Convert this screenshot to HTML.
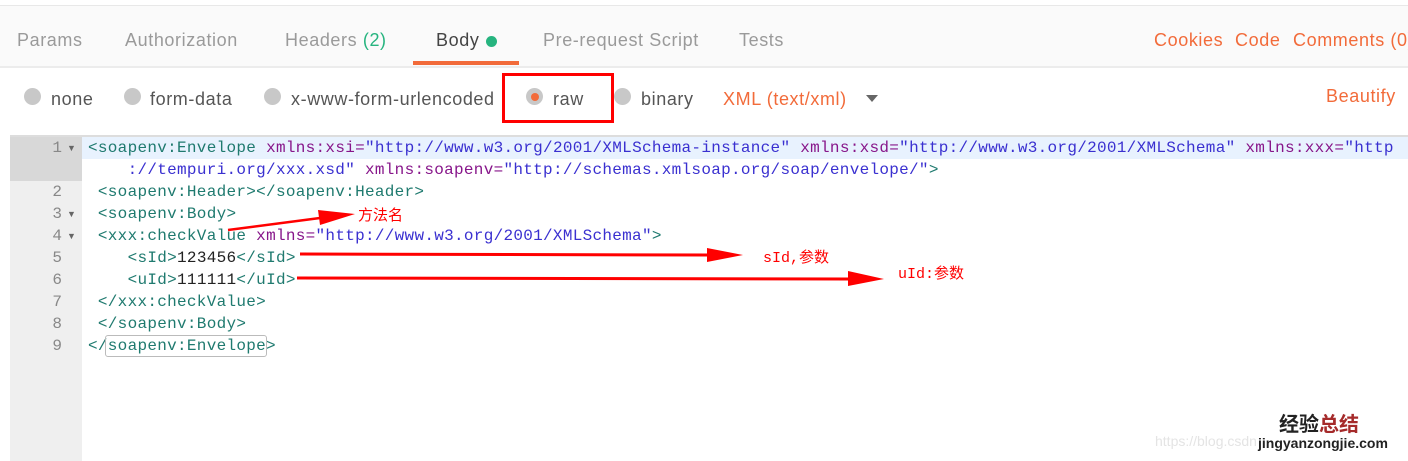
<!DOCTYPE html>
<html><head><meta charset="utf-8"><style>
body{margin:0;width:1408px;height:461px;overflow:hidden;background:#fff;font-family:"Liberation Sans","Noto Sans CJK SC",sans-serif;position:relative}
.a{position:absolute;white-space:pre}
.tab{font-size:18px;color:#9a9a9a;top:30px;letter-spacing:.6px}
.or{color:#f26b3a}
.rad{position:absolute;width:17px;height:17px;border-radius:50%;background:#c8c8c8;top:88px}
.opt{font-size:18px;color:#555;top:89px;letter-spacing:.6px}
.code{font-family:"Liberation Mono","DejaVu Sans Mono",monospace;font-size:16px;letter-spacing:.29px;line-height:22px;color:#1f7a6f}
.t{color:#1f7a6f}.n{color:#87168a}.v{color:#3a30d0}.k{color:#222}
.ln{position:absolute;left:10px;width:52px;text-align:right;font-family:"Liberation Mono",monospace;font-size:16px;color:#888;line-height:22px}
.fd{position:absolute;font-size:9px;color:#666;left:67px}
</style></head><body>
<div class="a" style="left:0;top:0;width:1408px;height:5px;background:#fff;border-bottom:1px solid #e8e8e8"></div>
<div class="a" style="left:0;top:6px;width:1408px;height:60px;background:#fafafa;border-bottom:2px solid #ececec"></div>
<div class="a tab" style="left:17px">Params</div>
<div class="a tab" style="left:125px">Authorization</div>
<div class="a tab" style="left:285px">Headers <span style="color:#26b47f">(2)</span></div>
<div class="a tab" style="left:436px;color:#444">Body</div>
<div class="a" style="left:486px;top:36px;width:11px;height:11px;border-radius:50%;background:#26b47f"></div>
<div class="a" style="left:413px;top:61px;width:106px;height:4px;background:#f26b3a"></div>
<div class="a tab" style="left:543px">Pre-request Script</div>
<div class="a tab" style="left:739px">Tests</div>
<div class="a tab or" style="left:1154px">Cookies</div>
<div class="a tab or" style="left:1235px">Code</div>
<div class="a tab or" style="left:1293px">Comments (0)</div>

<div class="rad" style="left:24px"></div><div class="a opt" style="left:51px">none</div>
<div class="rad" style="left:124px"></div><div class="a opt" style="left:150px">form-data</div>
<div class="rad" style="left:264px"></div><div class="a opt" style="left:291px">x-www-form-urlencoded</div>
<div class="rad" style="left:526px"></div><div class="a" style="left:531px;top:93px;width:8px;height:8px;border-radius:50%;background:#f26b3a"></div>
<div class="a opt" style="left:553px">raw</div>
<div class="a" style="left:502px;top:73px;width:106px;height:44px;border:3px solid #f00"></div>
<div class="rad" style="left:614px"></div><div class="a opt" style="left:641px">binary</div>
<div class="a opt or" style="left:723px;color:#f26b3a">XML (text/xml)</div>
<div class="a" style="left:866px;top:95px;width:0;height:0;border-left:6px solid transparent;border-right:6px solid transparent;border-top:7px solid #666"></div>
<div class="a opt" style="left:1326px;top:86px;color:#f26b3a">Beautify</div>

<div class="a" style="left:10px;top:135px;width:1398px;height:2px;background:#ddd"></div>
<div class="a" style="left:10px;top:137px;width:72px;height:324px;background:#efefef"></div>
<div class="a" style="left:10px;top:137px;width:72px;height:44px;background:#d8d8d8"></div>
<div class="a" style="left:82px;top:137px;width:1326px;height:22px;background:#e8f2fe"></div>
<div class="ln" style="top:137px">1</div><div class="ln" style="top:181px">2</div><div class="ln" style="top:203px">3</div><div class="ln" style="top:225px">4</div><div class="ln" style="top:247px">5</div><div class="ln" style="top:269px">6</div><div class="ln" style="top:291px">7</div><div class="ln" style="top:313px">8</div><div class="ln" style="top:335px">9</div>
<div class="fd" style="top:143px">▼</div><div class="fd" style="top:209px">▼</div><div class="fd" style="top:231px">▼</div>
<div class="a code" style="left:88px;top:137px"><span class="t">&lt;soapenv:Envelope</span> <span class="n">xmlns:xsi=</span><span class="v">"http://www.w3.org/2001/XMLSchema-instance"</span> <span class="n">xmlns:xsd=</span><span class="v">"http://www.w3.org/2001/XMLSchema"</span> <span class="n">xmlns:xxx=</span><span class="v">"http</span>
    <span class="v">://tempuri.org/xxx.xsd"</span> <span class="n">xmlns:soapenv=</span><span class="v">"http://schemas.xmlsoap.org/soap/envelope/"</span>&gt;
 &lt;soapenv:Header&gt;&lt;/soapenv:Header&gt;
 &lt;soapenv:Body&gt;
 &lt;xxx:checkValue <span class="n">xmlns=</span><span class="v">"http://www.w3.org/2001/XMLSchema"</span>&gt;
    &lt;sId&gt;<span class="k">123456</span>&lt;/sId&gt;
    &lt;uId&gt;<span class="k">111111</span>&lt;/uId&gt;
 &lt;/xxx:checkValue&gt;
 &lt;/soapenv:Body&gt;
&lt;/soapenv:Envelope&gt;</div>
<div class="a" style="left:105px;top:335px;width:160px;height:20px;border:1px solid #bbb;border-radius:3px"></div>

<svg class="a" style="left:0;top:0" width="1408" height="461">
<g fill="#f00" stroke="#f00">
<line x1="228" y1="230" x2="320" y2="218" stroke-width="2.5"/>
<polygon points="318,210 355,214 320,225" stroke="none"/>
<line x1="300" y1="254" x2="710" y2="255" stroke-width="3"/>
<polygon points="707,248 743,255 707,262" stroke="none"/>
<line x1="297" y1="278" x2="850" y2="279" stroke-width="3"/>
<polygon points="848,271 884,279 848,286" stroke="none"/>
</g></svg>
<div class="a" style="left:358px;top:204px;font-size:15px;color:#f00">方法名</div>
<div class="a" style="left:763px;top:246px;font-size:15px;color:#f00;font-family:'Liberation Mono','Noto Sans CJK SC',monospace">sId,参数</div>
<div class="a" style="left:898px;top:262px;font-size:15px;color:#f00;font-family:'Liberation Mono','Noto Sans CJK SC',monospace">uId:参数</div>

<div class="a" style="left:1155px;top:433px;font-size:14px;color:#e4e4e4">https://blog.csdn.net/qq_0000000</div>
<div class="a" style="left:1279px;top:411px;font-size:20px;font-weight:bold;color:#222;font-family:'Noto Sans CJK SC',sans-serif;line-height:24px">经验<span style="color:#a52a2a">总结</span></div>
<div class="a" style="left:1258px;top:435px;font-size:14px;font-weight:bold;color:#222;background:#fff;line-height:16px">jingyanzongjie.com</div>
</body></html>
